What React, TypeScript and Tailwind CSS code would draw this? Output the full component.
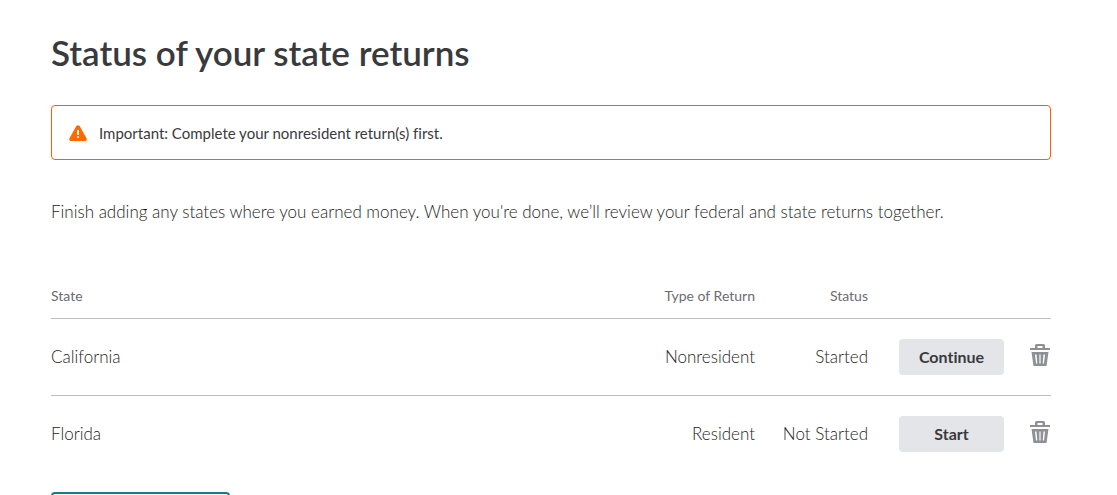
const stateReturns = [
  {
    state: "California",
    type: "Nonresident",
    status: "Started",
    action: "Continue",
  },
  {
    state: "Florida",
    type: "Resident",
    status: "Not Started",
    action: "Start",
  },
];

function WarningIcon() {
  return (
    <svg
      className="h-4 w-[18px] shrink-0"
      viewBox="0 0 18 16"
      aria-hidden="true"
    >
      <path
        d="M7.3 1.1a2 2 0 0 1 3.4 0l6.8 12.1A1.8 1.8 0 0 1 15.9 16H2.1A1.8 1.8 0 0 1 .5 13.2z"
        fill="#ff6a00"
      />
      <path d="M8.1 5h1.8v5H8.1zM8.1 11.3h1.8v1.8H8.1z" fill="#fff" />
    </svg>
  );
}

function TrashIcon() {
  return (
    <svg className="h-[22px] w-5" viewBox="0 0 20 22" aria-hidden="true">
      <path
        d="M0 4h5V1.5Q5 0 6.5 0h7Q15 0 15 1.5V4h5v2H0zM7.5 2v2h5V2z"
        fill="#8d9096"
        fillRule="evenodd"
      />
      <path
        d="M1.5 8h17l-2 14H3.500zM5 10.500l1 9h1.300l-.8-9zM9.400 10.500v9h1.200v-9zM13.500 10.500l-.8 9H14l1-9z"
        fill="#8d9096"
        fillRule="evenodd"
      />
    </svg>
  );
}

export default function App() {
  return (
    <main className="h-screen overflow-hidden bg-white pt-[30px] pr-[66px] pl-[51px] font-['Lato','Liberation_Sans',sans-serif] text-[#393a3d] [font-variant-ligatures:none]">
      <h1 className="text-[35px] leading-[44px] font-semibold">
        Status of your state returns
      </h1>

      <div
        role="alert"
        className="mt-[31px] flex h-[55px] items-center gap-3 rounded border border-[#ff5f00] px-[17px]"
      >
        <WarningIcon />
        <p className="text-[15px] leading-5">
          Important: Complete your nonresident return(s) first.
        </p>
      </div>

      <p className="mt-10 text-[17px] leading-6 font-light text-[#1c1d20]">
        Finish adding any states where you earned money. When you&apos;re done,
        we’ll review your federal and state returns together.
      </p>

      <table className="mt-[62px] w-full border-collapse text-right text-[17px] font-light text-[#1c1d20]">
        <thead>
          <tr className="h-8 border-b border-[#babec5] align-top text-sm leading-5 text-[#6b6c72]">
            <th scope="col" className="text-left font-normal">
              State
            </th>
            <th scope="col" className="w-[120px] font-normal">
              Type of Return
            </th>
            <th scope="col" className="w-[113px] font-normal">
              Status
            </th>
            <td className="w-[136px]" />
            <td className="w-[47px]" />
          </tr>
        </thead>
        <tbody>
          {stateReturns.map((item) => (
            <tr
              key={item.state}
              className="h-[77px] border-b border-[#babec5] last:border-b-0"
            >
              <td className="text-left">{item.state}</td>
              <td>{item.type}</td>
              <td>{item.status}</td>
              <td>
                <button
                  type="button"
                  className="h-9 w-[105px] rounded bg-[#e3e5e8] text-center text-base font-bold text-[#393a3d]"
                >
                  {item.action}
                </button>
              </td>
              <td className="pr-px">
                <button
                  type="button"
                  aria-label={`Delete ${item.state}`}
                  className="mb-1 ml-auto block"
                >
                  <TrashIcon />
                </button>
              </td>
            </tr>
          ))}
        </tbody>
      </table>

      <button
        type="button"
        aria-label="Add another state"
        className="mt-5 h-10 w-[179px] rounded border-2 border-[#0d7f8c]"
      />
    </main>
  );
}
